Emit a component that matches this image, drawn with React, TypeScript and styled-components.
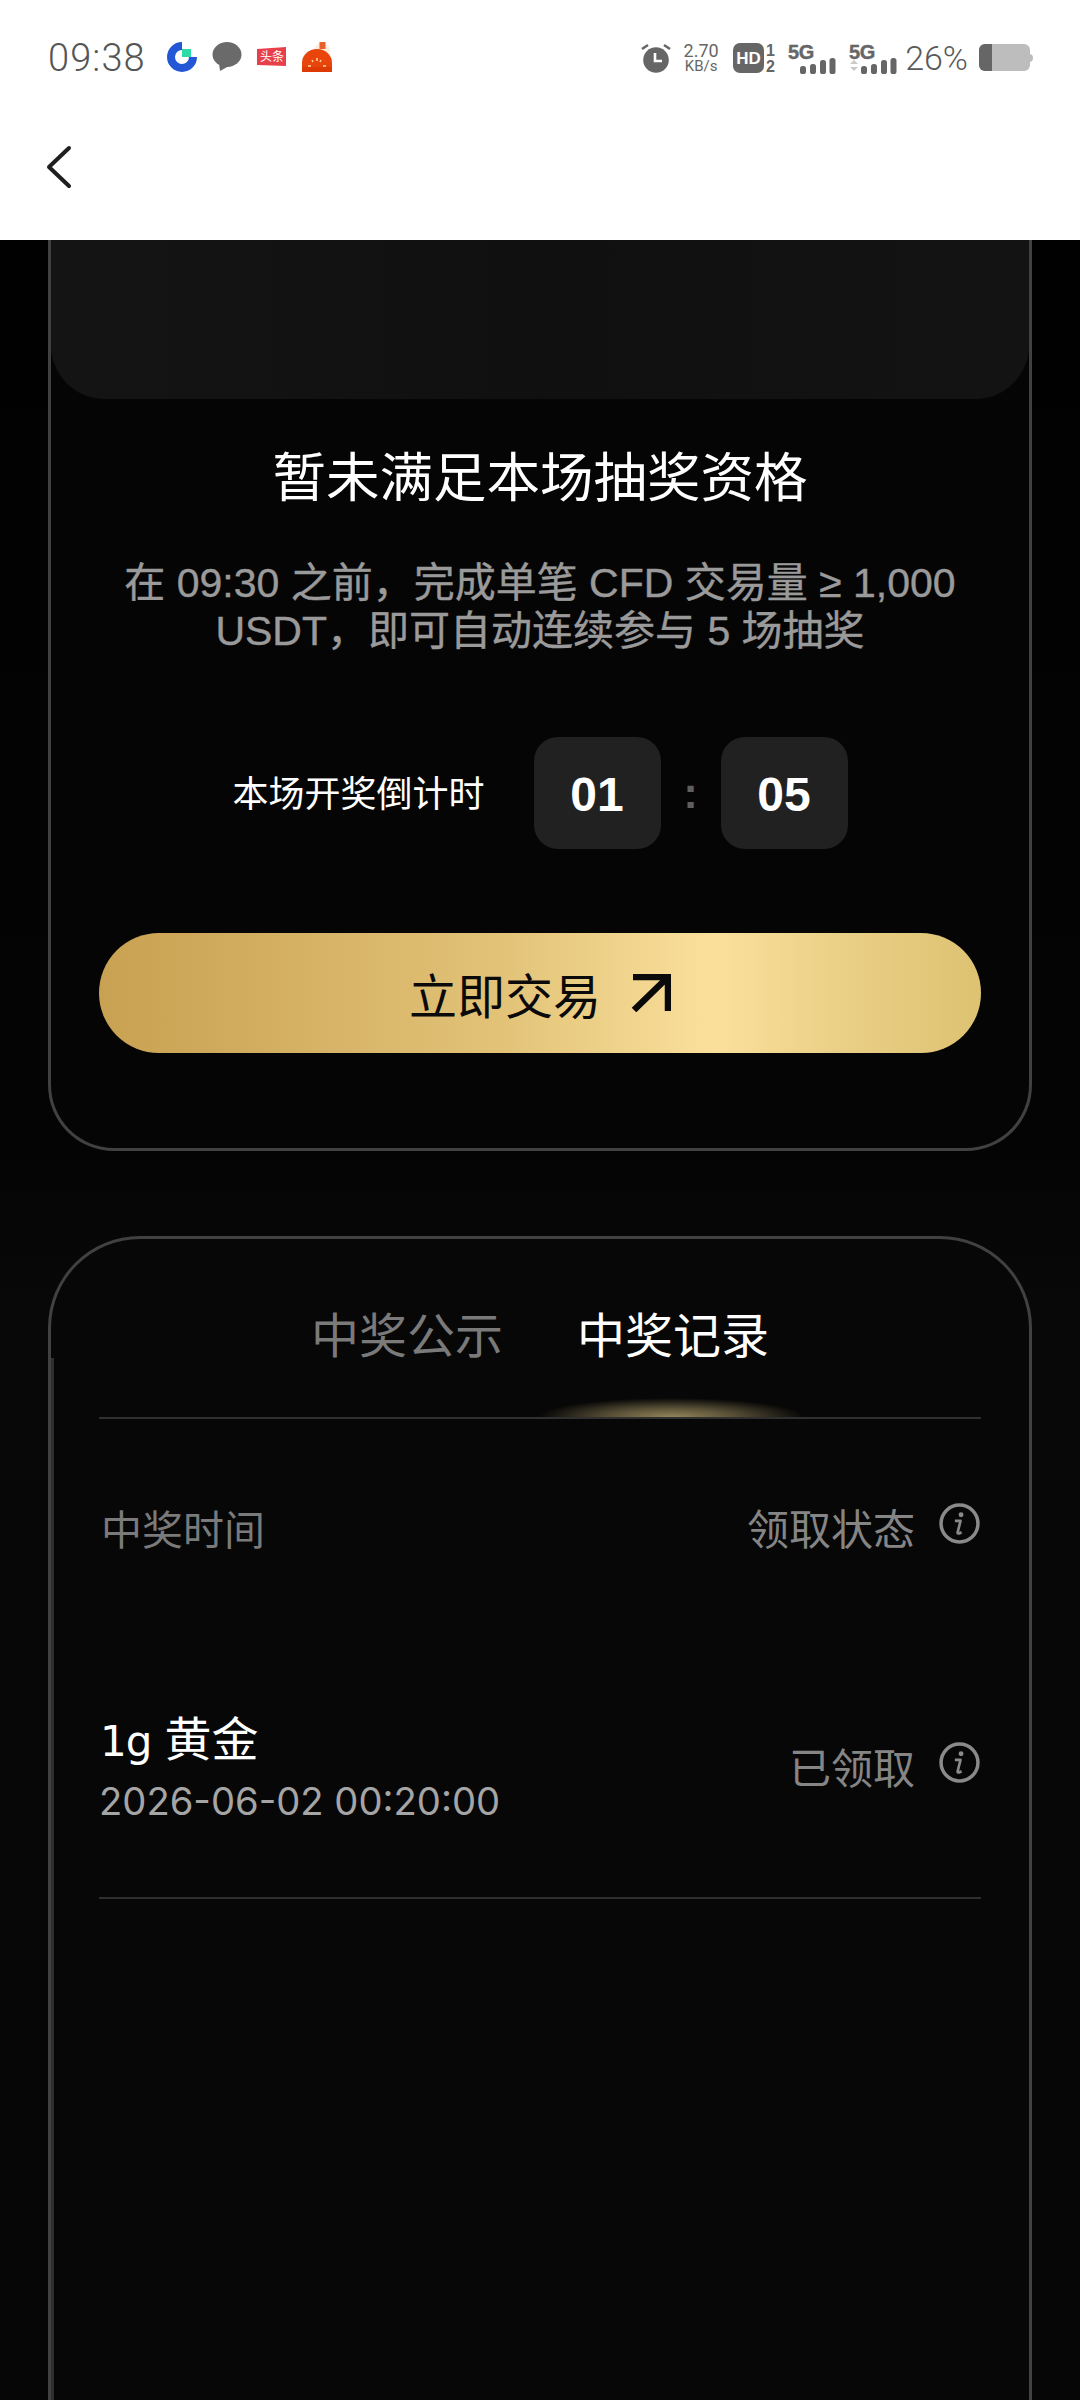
import React from "react";
import styled, { createGlobalStyle } from "styled-components";

const Global = createGlobalStyle`
  html, body { margin: 0; padding: 0; background: #080808; }
  * { box-sizing: border-box; }
`;
const FONT = `"Liberation Sans", "Noto Sans CJK SC", sans-serif`;

const Screen = styled.div`
  width: 1080px; height: 2400px; overflow: hidden;
  display: flex; flex-direction: column;
  font-family: ${FONT};
  background: linear-gradient(180deg, #010101 240px, #040404 1150px, #080808 1300px, #060606 100%);
`;
const StatusBar = styled.div`
  height: 90px; background: #fff; display: flex; align-items: flex-start; justify-content: space-between;
  padding: 41px 46px 0 48px;
`;
const StatusGroup = styled.div`
  display: flex; align-items: center;
  height: 34px;
`;
const Clock = styled.span`
  font-family: Roboto, sans-serif; font-weight: 300; font-size: 38px; color: #555; line-height: 36px;
  letter-spacing: 1.1px; margin-right: 21px;
`;
const NotifIcon = styled.svg`
  display: block; margin-right: 15px; flex: none; margin-top: -2px; overflow: visible;
`;
const StatusIcon = styled.svg<{ $ml: number }>`
  display: block; flex: none; margin-left: ${p => p.$ml}px; overflow: visible;
`;
const Speed = styled.div`
  width: 38px; margin-left: 11px; display: flex; flex-direction: column; align-items: center;
  font-family: Roboto, sans-serif; color: #666; font-weight: 400;
`;
const SpeedValue = styled.span`font-size: 18px; line-height: 17px;`;
const SpeedUnit = styled.span`font-size: 15px; line-height: 15px;`;
const Percent = styled.span`
  font-family: Roboto, sans-serif; font-weight: 300; font-size: 34px; line-height: 36px; color: #5a5a5a; margin-left: 8px;
`;
const NavBar = styled.div`
  height: 150px; background: #fff; display: flex; align-items: flex-start; padding: 55px 0 0 46px;
`;
const Content = styled.div`
  flex: 1; min-height: 0; padding: 0 48px; display: flex; flex-direction: column; gap: 85px;
`;
const DrawCard = styled.section`
  height: 911px; flex: none; background: #050505;
  border: 3px solid #414141; border-top: 0; border-radius: 0 0 66px 66px;
  display: flex; flex-direction: column; align-items: center;
`;
const PrizePanel = styled.div`
  width: 100%; height: 159px; flex: none;
  background: linear-gradient(90deg, #141414, #101010 50%, #131313);
  border-radius: 0 0 54px 54px;
`;
const Title = styled.h1`
  margin: 48px 0 0; font-size: 53.5px; line-height: 64px; font-weight: 400; color: #fff;
`;
const Desc = styled.p`
  margin: 48px 0 0; width: 860px; text-align: center; font-size: 41px; line-height: 48px; color: #9a9a9a; font-weight: 400;
  -webkit-text-stroke: 0.4px #9a9a9a;
`;
const CountRow = styled.div`
  margin-top: 82px; display: flex; align-items: center;
`;
const CountLabel = styled.span`
  font-size: 36px; color: #fff; margin-right: 49px; line-height: 50px; margin-top: 4px;
`;
const TimeBox = styled.span`
  width: 127px; height: 112px; border-radius: 24px; background: #212121; color: #fff; padding-top: 2px;
  font-weight: 700; font-size: 48px; display: flex; align-items: center; justify-content: center;
`;
const Colon = styled.span`
  width: 60px; text-align: center; font-weight: 700; font-size: 44px; color: #5e5e5e;
`;
const TradeButton = styled.button`
  margin-top: 84px; width: 882px; height: 120px; border: 0; border-radius: 60px; flex: none;
  background: linear-gradient(90deg, #c9a152 0%, #cfa95b 12%, #e1c277 45%, #fbe09c 70%, #e9ce85 85%, #dec272 100%);
  display: flex; align-items: center; justify-content: center; gap: 30px;
  font-family: ${FONT}; font-size: 48px; color: #0a0a0a; padding: 0;
`;
const ArrowIcon = styled.svg`display: block;`;
const RecordCard = styled.section`
  flex: 1; min-height: 0; background: #070707; position: relative;
  border: 3px solid #414141; border-bottom: 0; border-radius: 92px 92px 0 0;
  padding: 0 48px;
  display: flex; flex-direction: column;
`;
const LeftStripe = styled.span`
  position: absolute; left: 0; top: 119px; bottom: 0; width: 3px; background: #2e2e2e;
`;
const Tabs = styled.div`
  height: 180px; flex: none; display: flex; justify-content: center; gap: 74px; padding-top: 68px;
  border-bottom: 2px solid #303030; position: relative;
`;
const Tab = styled.span<{ $active?: boolean }>`
  font-size: 48px; line-height: 60px; color: ${p => (p.$active ? "#fff" : "#7a7a7a")};
`;
const Glow = styled.span`
  position: absolute; left: 440px; bottom: 0; width: 265px; height: 19px;
  background: radial-gradient(50% 100% at 50% 100%, #94865a 0%, #5b5238 45%, rgba(20,18,12,0) 100%);
`;
const HeadRow = styled.div`
  display: flex; justify-content: space-between; align-items: center; margin-top: 74px; height: 60px;
`;
const HeadLabel = styled.span`
  font-size: 41px; line-height: 60px; color: #7a7a7a; margin-left: 2px; margin-top: 15px;
`;
const StatusCell = styled.div`display: flex; align-items: center;`;
const StatusText = styled.span`
  font-size: 42px; line-height: 60px; color: #858585; margin-top: 16px; margin-right: 24px;
`;
const InfoIcon = styled.svg`display: block; margin-right: 1px;`;
const RecordRow = styled.div`
  display: flex; justify-content: space-between; align-items: center;
  margin-top: 112px; height: 234px; padding-bottom: 38px; border-bottom: 2px solid #2e2e2e;
`;
const PrizeInfo = styled.div`display: flex; flex-direction: column; margin-top: 12px;`;
const PrizeName = styled.span`font-size: 47px; line-height: 60px; color: #fff; margin-left: 1px;`;
const PrizeWeight = styled.span`font-family: "DejaVu Sans", sans-serif; font-size: 42px; letter-spacing: -1px;`;
const PrizeDate = styled.span`
  font-family: Inter, sans-serif; font-size: 38.2px; line-height: 50px; color: #a5a5a5; margin-top: 4px;
`;

const Info = () => (
  <InfoIcon width="41" height="41" viewBox="0 0 40 40">
    <circle cx="20" cy="20" r="18" fill="none" stroke="#8a8a8a" strokeWidth="3.4" />
    <circle cx="21.5" cy="11.5" r="2.4" fill="#8a8a8a" />
    <path d="M15.5 17.5 h5.5 l-2.8 11 q-.3 1.6 1.4 1.2 l2.4-1.2" fill="none" stroke="#8a8a8a" strokeWidth="2.6" strokeLinejoin="round" />
  </InfoIcon>
);

const Signal = ({ arrows }: { arrows?: boolean }) => (
  <StatusIcon $ml={arrows ? 13 : 12} width="48" height="31" viewBox="0 0 48 31">
    <text x="0" y="16" fontFamily="Liberation Sans, sans-serif" fontWeight="700" fontSize="20" fill="#666" stroke="#666" strokeWidth=".4" letterSpacing="-.3">5G</text>
    {arrows && <path d="M1 21 l4-4 4 4z M1 24 l4 4 4-4z" fill="#c9c9c9" />}
    <rect x="12" y="23" width="6" height="8" rx="2.6" fill="#666" />
    <rect x="22" y="21" width="6" height="10" rx="2.6" fill="#666" />
    <rect x="32" y="17" width="6" height="14" rx="2.6" fill="#666" />
    <rect x="41.5" y="15" width="6" height="16" rx="2.6" fill="#666" />
  </StatusIcon>
);

export default function App() {
  return (
    <Screen>
      <Global />
      <StatusBar>
        <StatusGroup>
          <Clock>09:38</Clock>
          <NotifIcon width="30" height="30" viewBox="0 0 30 30">
            <path d="M15 4 A11 11 0 1 0 26 15" fill="none" stroke="#2457d6" strokeWidth="8" />
            <rect x="15" y="7" width="9" height="8" fill="#2ddba6" />
          </NotifIcon>
          <NotifIcon width="30" height="30" viewBox="0 0 30 30">
            <ellipse cx="15" cy="12.5" rx="14.5" ry="12.5" fill="#6a6a6a" />
            <path d="M7 21 L8 29 L17 24z" fill="#6a6a6a" />
          </NotifIcon>
          <NotifIcon width="30" height="22" viewBox="0 0 30 22">
            <path d="M0 3 L29 1 V20 L0 19z" fill="#e8404a" />
            <text x="15" y="15" textAnchor="middle" fontFamily="Noto Sans CJK SC, sans-serif" fontSize="12" fill="#fff">头条</text>
          </NotifIcon>
          <NotifIcon width="30" height="30" viewBox="0 0 30 30">
            <circle cx="20" cy="9" r="8" fill="#fbeedd" />
            <rect x="17.5" y="0" width="6" height="7" fill="#e8602a" />
            <path d="M0 30 V21 A15 14 0 0 1 30 21 V30z" fill="#e8440c" />
            <path d="M0 30 V25 H30 V30z" fill="#dd3a05" />
            <path d="M6 24h3M21 24h3M10 18l1 2M19 18l-1 2M15 16v3" stroke="#fbd9a0" strokeWidth="1.5" />
          </NotifIcon>
        </StatusGroup>
        <StatusGroup>
          <StatusIcon $ml={0} width="30" height="30" viewBox="0 0 30 30">
            <circle cx="15" cy="17" r="12.8" fill="#666" />
            <path d="M14 10 v8 h7" fill="none" stroke="#fff" strokeWidth="2.6" />
            <path d="M1 6 l6-4 M29 6 l-6-4" stroke="#666" strokeWidth="2.6" />
          </StatusIcon>
          <Speed>
            <SpeedValue>2.70</SpeedValue>
            <SpeedUnit>KB/s</SpeedUnit>
          </Speed>
          <StatusIcon $ml={13} width="43" height="30" viewBox="0 0 43 30">
            <rect x="0" y="0" width="31" height="30" rx="7" fill="#666" />
            <text x="15.5" y="21" textAnchor="middle" fontFamily="Liberation Sans, sans-serif" fontWeight="700" fontSize="17" fill="#fff">HD</text>
            <text x="37.5" y="13" textAnchor="middle" fontFamily="Liberation Sans, sans-serif" fontWeight="700" fontSize="16" fill="#666">1</text>
            <text x="37.5" y="29" textAnchor="middle" fontFamily="Liberation Sans, sans-serif" fontWeight="700" fontSize="16" fill="#666">2</text>
          </StatusIcon>
          <Signal />
          <Signal arrows />
          <Percent>26%</Percent>
          <StatusIcon $ml={11} width="55" height="28" viewBox="0 0 55 28">
            <rect x="0" y="0" width="51" height="27" rx="6" fill="#bdbdbd" />
            <path d="M6 0 H13 V27 H6 a6 6 0 0 1-6-6 V6 a6 6 0 0 1 6-6z" fill="#666" />
            <path d="M51 10 q3 .5 3 4 t-3 4z" fill="#bdbdbd" />
          </StatusIcon>
        </StatusGroup>
      </StatusBar>
      <NavBar>
        <svg width="26" height="44" viewBox="0 0 26 44">
          <path d="M23 3 L3 22 L23 41" fill="none" stroke="#1f1f1f" strokeWidth="4" strokeLinecap="round" strokeLinejoin="round" />
        </svg>
      </NavBar>
      <Content>
        <DrawCard>
          <PrizePanel />
          <Title>暂未满足本场抽奖资格</Title>
          <Desc>在 09:30 之前，完成单笔 CFD 交易量 ≥ 1,000 USDT，即可自动连续参与 5 场抽奖</Desc>
          <CountRow>
            <CountLabel>本场开奖倒计时</CountLabel>
            <TimeBox>01</TimeBox>
            <Colon>:</Colon>
            <TimeBox>05</TimeBox>
          </CountRow>
          <TradeButton>
            立即交易
            <ArrowIcon width="40" height="38" viewBox="0 0 40 38">
              <path d="M2 3 H37 V37 M37 3 L3 36" fill="none" stroke="#0a0a0a" strokeWidth="6.5" />
            </ArrowIcon>
          </TradeButton>
        </DrawCard>
        <RecordCard>
          <LeftStripe />
          <Tabs>
            <Tab>中奖公示</Tab>
            <Tab $active>中奖记录</Tab>
            <Glow />
          </Tabs>
          <HeadRow>
            <HeadLabel>中奖时间</HeadLabel>
            <StatusCell>
              <StatusText>领取状态</StatusText>
              <Info />
            </StatusCell>
          </HeadRow>
          <RecordRow>
            <PrizeInfo>
              <PrizeName><PrizeWeight>1g</PrizeWeight> 黄金</PrizeName>
              <PrizeDate>2026-06-02 00:20:00</PrizeDate>
            </PrizeInfo>
            <StatusCell>
              <StatusText>已领取</StatusText>
              <Info />
            </StatusCell>
          </RecordRow>
        </RecordCard>
      </Content>
    </Screen>
  );
}
